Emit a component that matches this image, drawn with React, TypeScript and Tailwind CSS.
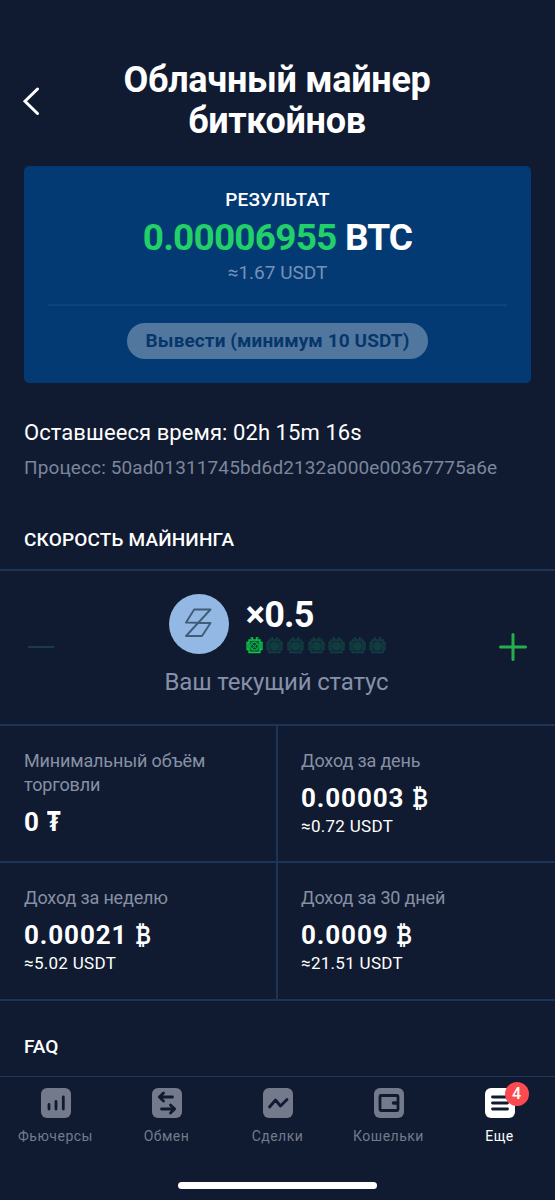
import type { ReactNode } from "react"
import clsx from "clsx"

interface StatProps {
  label: string
  value: string
  sign: string
  note?: string
  className?: string
}

function Stat({ label, value, sign, note, className }: StatProps) {
  return (
    <div className={clsx("border-b-2 border-[#1c3557] pt-[23px]", className)}>
      <div className="max-w-[200px] text-[18px] leading-[24px] tracking-[-0.15px] text-[#8790a3]">{label}</div>
      <div className="mt-[7px] text-[26px] leading-[36px] font-bold tracking-[0.9px] whitespace-nowrap">
        {value} <span className="inline-block origin-left scale-x-[0.75]">{sign}</span>
      </div>
      {note && <div className="-mt-[1px] text-[17px] leading-[22px] tracking-[0.3px]">{note}</div>}
    </div>
  )
}

function Chip({ active }: { active: boolean }) {
  return (
    <svg width="17" height="17" viewBox="0 0 17 17" className={active ? "text-[#0bc746]" : "text-[#123f43]"}>
      <path
        d="M4.5 0.8h2v2M12.5 0.8h-2v2M3 3h11v12.5H3zM3 5.5H1v7h2M14 5.5h2v7h-2"
        fill="currentColor"
        fillOpacity="0.4"
        stroke="currentColor"
        strokeWidth="1.3"
      />
      <circle cx="8.5" cy="9.2" r="3.9" fill="#103c3b" stroke="currentColor" strokeWidth="1" />
      <path d="M6.2 7l4.6 4.6M10.8 7l-4.6 4.6" stroke="currentColor" strokeWidth="1" />
    </svg>
  )
}

interface TabProps {
  label: string
  active?: boolean
  badge?: number
  children: ReactNode
}

function Tab({ label, active, badge, children }: TabProps) {
  return (
    <div className={clsx("flex flex-1 flex-col items-center", active ? "text-white" : "text-[#737a8c]")}>
      <div className="relative">
        <svg width="30" height="30" viewBox="0 0 30 30" fill="none">
          <rect width="30" height="30" rx="6" fill="currentColor" />
          <g stroke="#101b31" strokeWidth="2.8" strokeLinecap="round" strokeLinejoin="round">
            {children}
          </g>
        </svg>
        {badge && (
          <span className="absolute -top-[6px] left-[20px] flex size-[24px] items-center justify-center rounded-full bg-[#fb4b50] text-[16px] font-medium text-white">
            {badge}
          </span>
        )}
      </div>
      <div className="mt-[9px] text-[14px] leading-[18px] tracking-[0.5px]">{label}</div>
    </div>
  )
}

export default function App() {
  return (
    <div className="flex h-[1200px] w-[555px] flex-col overflow-hidden bg-[#101b31] font-['Roboto','DejaVu_Sans',sans-serif] text-white">
      <header className="flex h-[166px] items-start pt-[60px]">
        <svg width="18" height="28" viewBox="0 0 18 28" fill="none" className="mt-[27px] ml-[22px]">
          <path d="M15.5 2L3 14.3L15.5 26.5" stroke="white" strokeWidth="3" strokeLinecap="round" />
        </svg>
        <h1 className="mr-[41px] flex-1 text-center text-[36px] leading-[41px] font-bold tracking-[-0.3px]">
          Облачный майнер
          <br />
          биткойнов
        </h1>
      </header>

      <section className="mx-6 flex h-[217px] flex-col items-center rounded-[5px] bg-[#043a73] px-6 pt-[22px]">
        <div className="text-[19px] leading-[24px] font-medium tracking-[0.2px]">РЕЗУЛЬТАТ</div>
        <div className="mt-[5px] text-[37px] leading-[42px] font-bold tracking-[-0.8px]">
          <span className="text-[#21d068]">0.00006955</span> BTC
        </div>
        <div className="mt-[2px] text-[19px] leading-[24px] text-[#7591b8]">≈1.67 USDT</div>
        <div className="mt-[19px] h-[2px] w-full bg-[#104479]" />
        <button className="mt-[17px] h-[36px] w-[301px] rounded-full bg-[#52779f] text-[19px] font-bold tracking-[0.1px] text-[#06366a]">
          Вывести (минимум 10 USDT)
        </button>
      </section>

      <section className="h-[186px] px-6 pt-[36px] whitespace-nowrap">
        <div className="text-[22px] leading-[28px] tracking-[0.08px]">Оставшееся время: 02h 15m 16s</div>
        <div className="mt-[9px] text-[19px] leading-[24px] tracking-[0.12px] text-[#7b869b]">
          Процесс: 50ad01311745bd6d2132a000e00367775a6e
        </div>
        <h2 className="mt-[48px] text-[19px] leading-[24px] font-medium tracking-[0.15px]">СКОРОСТЬ МАЙНИНГА</h2>
      </section>

      <section className="flex h-[157px] items-start justify-between border-y-2 border-[#1c3557] px-[28px]">
        <div className="mt-[75px] h-[2px] w-[26px] bg-[#183d43]" />
        <div className="flex flex-col items-center pt-[23px]">
          <div className="ml-[2px] flex items-center">
            <svg width="60" height="60" viewBox="0 0 60 60" fill="none">
              <circle cx="30" cy="30" r="30" fill="#92b8e3" />
              <path
                d="M25.2 15.5H41.5L17 42H33L41.5 29L17 28.5Z"
                stroke="#405d78"
                strokeWidth="1.9"
                strokeLinejoin="round"
              />
            </svg>
            <div className="ml-[17px]">
              <div className="text-[36px] leading-[40px] font-bold tracking-[-0.7px]">×0.5</div>
              <div className="mt-[2px] flex gap-[3.6px]">
                {[0, 1, 2, 3, 4, 5, 6].map((i) => (
                  <Chip key={i} active={i === 0} />
                ))}
              </div>
            </div>
          </div>
          <div className="mt-[13px] text-[24px] leading-[30px] tracking-[-0.15px] text-[#8790a8]">Ваш текущий статус</div>
        </div>
        <svg width="28" height="28" viewBox="0 0 28 28" className="mt-[62px]">
          <path d="M14 1.5v25M1.5 14h25" stroke="#25af4c" strokeWidth="3" strokeLinecap="round" />
        </svg>
      </section>

      <section className="grid grid-cols-[278px_277px] grid-rows-[137px_138px]">
        <Stat label="Минимальный объём торговли" value="0" sign="₮" className="border-r-2 pl-6" />
        <Stat label="Доход за день" value="0.00003" sign="₿" note="≈0.72 USDT" className="pl-[23px]" />
        <Stat label="Доход за неделю" value="0.00021" sign="₿" note="≈5.02 USDT" className="border-r-2 pl-6" />
        <Stat label="Доход за 30 дней" value="0.0009" sign="₿" note="≈21.51 USDT" className="pl-[23px]" />
      </section>

      <h2 className="h-[75px] px-6 pt-[34px] text-[19px] leading-[24px] font-medium">FAQ</h2>

      <nav className="flex h-[124px] flex-col items-center border-t border-[#21395b] pt-[11px]">
        <div className="flex w-full">
          <Tab label="Фьючерсы">
            <path d="M8 16.5v4.5M15 13.5v7.5M22.3 9v12" />
          </Tab>
          <Tab label="Обмен">
            <path d="M20.5 9H8M11.5 5L7.3 9L11.5 13M9.5 21H22M18.5 17L22.7 21L18.5 25" />
          </Tab>
          <Tab label="Сделки">
            <path d="M6.5 19L12.5 12L17.5 18L24 11.5" />
          </Tab>
          <Tab label="Кошельки">
            <rect x="6" y="7.5" width="18" height="15" rx="1" />
            <path d="M23.5 15H19.5" strokeWidth="3.5" />
          </Tab>
          <Tab label="Еще" active badge={4}>
            <path d="M7.5 9h15M7.5 15h15M7.5 21h15" />
          </Tab>
        </div>
        <div className="mt-[37px] h-[7px] w-[199px] rounded-full bg-white" />
      </nav>
    </div>
  )
}
